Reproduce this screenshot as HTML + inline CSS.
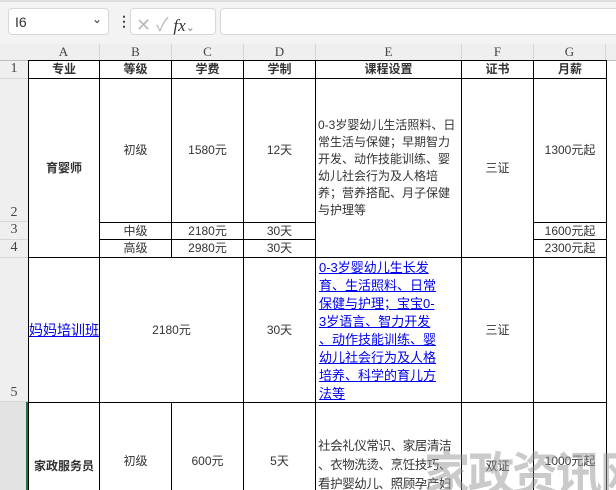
<!DOCTYPE html>
<html><head><meta charset="utf-8"><style>
*{margin:0;padding:0;box-sizing:border-box}
html,body{width:616px;height:490px;overflow:hidden}
body{background:#fff;position:relative;font-family:"Liberation Sans","WenQuanYi Zen Hei","Noto Sans CJK SC",sans-serif;font-size:12px;color:#333}
#w{position:absolute;left:0;top:0;width:616px;height:490px;overflow:hidden}
.a{position:absolute}
.c{position:absolute;display:flex;align-items:center;justify-content:center;text-align:center;border-right:1px solid #000;border-bottom:1px solid #000;line-height:17px;overflow:hidden}
.h{position:absolute;background:#efefef;color:#444;font-family:"Liberation Serif","WenQuanYi Zen Hei",serif;font-size:13px;text-align:center;border-right:1px solid #d6d6d6}
.r{position:absolute;left:0;width:28px;background:#efefef;color:#444;font-family:"Liberation Serif",serif;font-size:14px;text-align:center;border-bottom:1px solid #d6d6d6}
b{font-weight:bold;color:#333}
.nb{border-bottom:none}
</style></head><body><div id="w">
<div class="a" style="left:0;top:0;width:616px;height:44px;background:#f3f3f3;border-top:2px solid #ddd"></div>
<div class="a" style="left:8px;top:8px;width:101px;height:27px;background:#fff;border:1px solid #d8d8d8;border-radius:4px;font-size:14px;padding:5px 6px;color:#333">I6<span style="position:absolute;right:6px;top:3px;font-size:12px">&#8964;</span></div>
<div class="a" style="left:117px;top:13px;font-size:14px;font-weight:bold;color:#444">&#8942;</div>
<div class="a" style="left:130px;top:8px;width:86px;height:27px;background:#fff;border:1px solid #d8d8d8;border-radius:4px;color:#bbb;font-size:18px;padding:2px 5px;white-space:nowrap">✕ ✓ <i style="font-family:'Liberation Serif',serif;color:#333;font-size:17px">fx</i><span style="font-size:11px;color:#888">&#8964;</span></div>
<div class="a" style="left:220px;top:8px;width:400px;height:27px;background:#fff;border:1px solid #d8d8d8;border-radius:4px"></div>
<div class="a" style="left:0;top:44px;width:616px;height:17px;background:#efefef;border-bottom:1px solid #bbb"></div>
<div class="h" style="left:28px;top:44px;width:72px;height:16px">A</div>
<div class="h" style="left:100px;top:44px;width:72px;height:16px">B</div>
<div class="h" style="left:172px;top:44px;width:72px;height:16px">C</div>
<div class="h" style="left:244px;top:44px;width:72px;height:16px">D</div>
<div class="h" style="left:316px;top:44px;width:146px;height:16px">E</div>
<div class="h" style="left:462px;top:44px;width:72px;height:16px">F</div>
<div class="h" style="left:534px;top:44px;width:72px;height:16px">G</div>
<div class="a" style="left:0;top:61px;width:28px;height:429px;background:#efefef;border-right:1px solid #ccc"></div>
<div class="r" style="top:61px;height:18px">1</div>
<div class="r" style="top:79px;height:143px;padding-top:126px">2</div>
<div class="r" style="top:222px;height:18px">3</div>
<div class="r" style="top:240px;height:18px">4</div>
<div class="r" style="top:258px;height:144px;padding-top:127px">5</div>
<div class="r" style="top:402px;height:88px;background:#e3e3e3;border-right:2px solid #217346;border-bottom:none"></div>
<div class="a" style="left:28px;top:60px;width:579px;border-top:1px solid #000"></div>
<div class="a" style="left:28px;top:60px;height:430px;border-left:1px solid #000"></div>
<div class="c" style="left:29px;top:61px;width:71px;height:18px"><b>专业</b></div>
<div class="c" style="left:100px;top:61px;width:72px;height:18px"><b>等级</b></div>
<div class="c" style="left:172px;top:61px;width:72px;height:18px"><b>学费</b></div>
<div class="c" style="left:244px;top:61px;width:72px;height:18px"><b>学制</b></div>
<div class="c" style="left:316px;top:61px;width:146px;height:18px"><b>课程设置</b></div>
<div class="c" style="left:462px;top:61px;width:72px;height:18px"><b>证书</b></div>
<div class="c" style="left:534px;top:61px;width:73px;height:18px"><b>月薪</b></div>
<div class="c" style="left:29px;top:79px;width:71px;height:179px"><b>育婴师</b></div>
<div class="c" style="left:100px;top:79px;width:72px;height:144px">初级</div>
<div class="c" style="left:172px;top:79px;width:72px;height:144px">1580元</div>
<div class="c" style="left:244px;top:79px;width:72px;height:144px">12天</div>
<div class="c" style="left:316px;top:79px;width:146px;height:179px;justify-content:flex-start;text-align:left;padding-left:2px">0-3岁婴幼儿生活照料、日常生活与保健；早期智力开发、动作技能训练、婴幼儿社会行为及人格培养；营养搭配、月子保健与护理等</div>
<div class="c" style="left:462px;top:79px;width:72px;height:179px">三证</div>
<div class="c" style="left:534px;top:79px;width:73px;height:144px">1300元起</div>
<div class="c" style="left:100px;top:223px;width:72px;height:17px">中级</div>
<div class="c" style="left:172px;top:223px;width:72px;height:17px">2180元</div>
<div class="c" style="left:244px;top:223px;width:72px;height:17px">30天</div>
<div class="c" style="left:534px;top:223px;width:73px;height:17px">1600元起</div>
<div class="c" style="left:100px;top:240px;width:72px;height:18px">高级</div>
<div class="c" style="left:172px;top:240px;width:72px;height:18px">2980元</div>
<div class="c" style="left:244px;top:240px;width:72px;height:18px">30天</div>
<div class="c" style="left:534px;top:240px;width:73px;height:18px">2300元起</div>
<div class="c" style="left:29px;top:258px;width:71px;height:145px;justify-content:flex-start;color:#00e;text-decoration:underline;font-size:14px;white-space:nowrap">妈妈培训班</div>
<div class="c" style="left:100px;top:258px;width:144px;height:145px">2180元</div>
<div class="c" style="left:244px;top:258px;width:72px;height:145px">30天</div>
<div class="c" style="left:316px;top:258px;width:146px;height:145px;justify-content:flex-start;text-align:left;padding-left:3px"><div style="width:122px;color:#00e;text-decoration:underline;font-size:13px;line-height:18px;padding-top:2px;line-break:anywhere;word-break:break-all">0-3岁婴幼儿生长发育、生活照料、日常保健与护理；宝宝0-3岁语言、智力开发、动作技能训练、婴幼儿社会行为及人格培养、科学的育儿方法等</div></div>
<div class="c" style="left:462px;top:258px;width:72px;height:145px">三证</div>
<div class="c" style="left:534px;top:258px;width:73px;height:145px"></div>
<div class="c nb" style="left:29px;top:403px;width:71px;height:87px;padding-top:40px"><b>家政服务员</b></div>
<div class="c nb" style="left:100px;top:403px;width:72px;height:87px;padding-top:30px">初级</div>
<div class="c nb" style="left:172px;top:403px;width:72px;height:87px;padding-top:30px">600元</div>
<div class="c nb" style="left:244px;top:403px;width:72px;height:87px;padding-top:30px">5天</div>
<div class="c nb" style="left:316px;top:403px;width:146px;height:87px;justify-content:flex-start;align-items:flex-start;text-align:left;padding:34px 0 0 2px;line-height:19px;font-size:12.5px;letter-spacing:-0.4px;line-break:anywhere">社会礼仪常识、家居清洁、衣物洗烫、烹饪技巧、看护婴幼儿、照顾孕产妇、照料老人、看护病人</div>
<div class="c nb" style="left:462px;top:403px;width:72px;height:87px;padding-top:40px">双证</div>
<div class="c nb" style="left:534px;top:403px;width:73px;height:87px;padding-top:30px">1000元起</div>
<div class="a" style="left:424px;top:438px;font-size:46px;font-weight:bold;color:rgba(150,150,150,0.5);letter-spacing:-2px;white-space:nowrap">家政资讯网</div>
</div></body></html>
